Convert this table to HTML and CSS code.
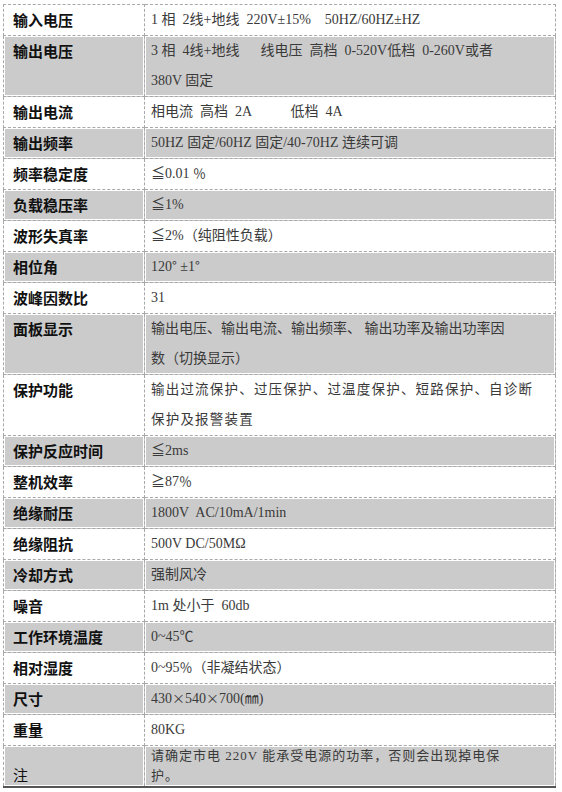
FILE: index.html
```html
<!DOCTYPE html>
<html lang="zh-CN">
<head>
<meta charset="utf-8">
<title>技术参数</title>
<link rel="stylesheet" href="styles.css">
</head>
<body>
<table class="spec">
  <tr class="r1"><th>输入电压</th><td>1 相&nbsp; 2线+地线&nbsp; 220V±15%&nbsp;&nbsp;&nbsp; 50HZ/60HZ±HZ</td></tr>
  <tr class="alt r2"><th>输出电压</th><td>3 相&nbsp; 4线+地线&nbsp;&nbsp;&nbsp;&nbsp;&nbsp; 线电压&nbsp; 高档&nbsp; 0-520V低档&nbsp; 0-260V或者<br>380V 固定</td></tr>
  <tr><th>输出电流</th><td>相电流&nbsp; 高档&nbsp; 2A&nbsp;&nbsp;&nbsp;&nbsp;&nbsp;&nbsp;&nbsp;&nbsp;&nbsp;&nbsp; 低档&nbsp; 4A</td></tr>
  <tr class="alt"><th>输出频率</th><td>50HZ 固定/60HZ 固定/40-70HZ 连续可调</td></tr>
  <tr><th>频率稳定度</th><td>≦0.01 <span class="cjk">％</span></td></tr>
  <tr class="alt"><th>负载稳压率</th><td>≦1%</td></tr>
  <tr><th>波形失真率</th><td>≦2%（纯阻性负载）</td></tr>
  <tr class="alt"><th>相位角</th><td>120<span class="cjk">°</span> ±1<span class="cjk">°</span></td></tr>
  <tr><th>波峰因数比</th><td>31</td></tr>
  <tr class="alt two"><th>面板显示</th><td>输出电压、输出电流、输出频率、 输出功率及输出功率因<br>数（切换显示）</td></tr>
  <tr class="two"><th>保护功能</th><td class="spaced">输出过流保护、过压保护、过温度保护、短路保护、自诊断<br>保护及报警装置</td></tr>
  <tr class="alt"><th>保护反应时间</th><td>≦2ms</td></tr>
  <tr><th>整机效率</th><td>≧87<span class="cjk">％</span></td></tr>
  <tr class="alt"><th>绝缘耐压</th><td>1800V&nbsp; AC/10mA/1min</td></tr>
  <tr><th>绝缘阻抗</th><td>500V DC/50MΩ</td></tr>
  <tr class="alt"><th>冷却方式</th><td>强制风冷</td></tr>
  <tr><th>噪音</th><td>1m 处小于&nbsp; 60db</td></tr>
  <tr class="alt"><th>工作环境温度</th><td>0~45℃</td></tr>
  <tr><th>相对湿度</th><td>0~95<span class="cjk">％</span>（非凝结状态）</td></tr>
  <tr class="alt"><th>尺寸</th><td>430<span class="cjk">×</span>540<span class="cjk">×</span>700(㎜)</td></tr>
  <tr><th>重量</th><td>80KG</td></tr>
  <tr class="alt note"><th>注</th><td>请确定市电 220V 能承受电源的功率，否则会出现掉电保<br>护。</td></tr>
</table>
</body>
</html>
```
FILE: styles.css
```css
html, body {
  margin: 0;
  padding: 0;
  background: #ffffff;
}

body {
  padding: 4px 0 0 3px;
}

.spec {
  border-collapse: collapse;
  width: 553px;
  table-layout: fixed;
  border-bottom: 2px solid #555;
}

.spec th,
.spec td {
  border: 1px dashed #a8a8a8;
  height: 30px;
  padding: 0;
  vertical-align: top;
  line-height: 30px;
  text-align: left;
}

.spec th {
  width: 131px;
  padding-left: 9px;
  font-family: "Noto Sans CJK SC", sans-serif;
  font-weight: 700;
  font-size: 15px;
  color: #111;
}

.spec td {
  padding-left: 6px;
  font-family: "Liberation Serif", "Noto Sans CJK SC", serif;
  font-size: 14px;
  color: #3a3a3a;
  white-space: nowrap;
}

.spec td .cjk {
  font-family: "Noto Sans CJK SC", sans-serif;
  font-size: 13px;
  line-height: 1;
}

.spec tr.alt th,
.spec tr.alt td {
  background: #cbcbcb;
  box-shadow: inset 0 0 0 1px #ffffff;
}

.spec tr.r2 td,
.spec tr.two td {
  height: 60px;
}

.spec td.spaced {
  letter-spacing: 1.2px;
  font-size: 13.5px;
}

.spec tr.note th {
  font-weight: 400;
  vertical-align: bottom;
  line-height: 22px;
  height: 40px;
}

.spec tr.note td {
  line-height: 20px;
  font-size: 13px;
  letter-spacing: 1px;
  height: 40px;
}
```
